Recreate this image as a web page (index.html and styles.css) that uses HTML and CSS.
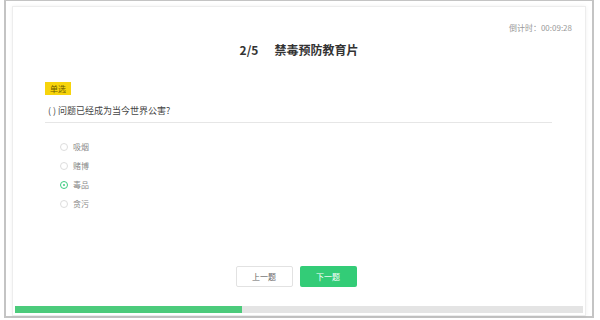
FILE: index.html
```html
<!DOCTYPE html>
<html lang="zh-CN">
<head>
    <meta charset="UTF-8">
    <title>禁毒预防教育片</title>
    <link rel="stylesheet" href="styles.css">
</head>
<body>
    <div class="frame">
        <div class="card">
            <div class="timer">倒计时：00:09:28</div>
            <h2 class="title"><span class="num">2/5</span>禁毒预防教育片</h2>

            <div class="body">
                <span class="tag">单选</span>
                <div class="question">( ) 问题已经成为当今世界公害?</div>

                <ul class="options">
                    <li><span class="radio"></span>吸烟</li>
                    <li><span class="radio"></span>赌博</li>
                    <li class="checked"><span class="radio"></span>毒品</li>
                    <li><span class="radio"></span>贪污</li>
                </ul>
            </div>

            <div class="actions">
                <button class="btn prev">上一题</button>
                <button class="btn next">下一题</button>
            </div>

            <div class="progress">
                <div class="progress-bar" style="width: 40%"></div>
            </div>
        </div>
    </div>
</body>
</html>
```

FILE: styles.css
```css
* {
    box-sizing: border-box;
}
body {
    margin: 0;
    background-color: #fff;
    font-family: "Noto Sans CJK SC", "Noto Sans", sans-serif;
}
.frame {
    width: 590px;
    height: 318px;
    margin-left: 4px;
    padding: 5px 6px 0 6px;
    border: 2px solid #c4c4c4;
    border-top-width: 1px;
}
.card {
    height: 310px;
    border: 1px solid #ededed;
    box-shadow: 0 0 4px rgba(0,0,0,0.06);
    display: flex;
    flex-direction: column;
}
.timer {
    padding: 16px 13px 0 0;
    text-align: right;
    font-size: 8px;
    line-height: 10px;
    color: #999;
}
.title {
    margin: 9px 0 0 0;
    text-align: center;
    font-size: 12px;
    line-height: 16px;
    font-weight: bold;
    color: #333;
}
.title .num {
    margin-right: 16px;
}
.body {
    padding: 0 33px 0 32px;
}
.tag {
    display: inline-block;
    margin-top: 24px;
    padding: 0 5px;
    height: 13px;
    line-height: 13px;
    font-size: 8px;
    background-color: #f7d40c;
    color: #6b5a00;
}
.question {
    margin-top: 8px;
    padding: 0 0 5px 3px;
    font-size: 9px;
    line-height: 12px;
    color: #444;
    border-bottom: 1px solid #e6e6e6;
}
.options {
    list-style: none;
    margin: 14px 0 0 0;
    padding: 0 0 0 15px;
}
.options li {
    display: flex;
    align-items: center;
    height: 19px;
    font-size: 8px;
    color: #888;
}
.radio {
    width: 8px;
    height: 8px;
    margin-right: 5px;
    border: 1px solid #ddd;
    border-radius: 50%;
    position: relative;
}
.checked .radio {
    border-color: #3ccb80;
}
.checked .radio::after {
    content: "";
    position: absolute;
    left: 2px;
    top: 2px;
    width: 2px;
    height: 2px;
    border-radius: 50%;
    background-color: #3ccb80;
}
.actions {
    margin-top: 53px;
    padding-right: 6px;
    display: flex;
    justify-content: center;
    gap: 7px;
}
.btn {
    width: 57px;
    height: 21px;
    padding: 0;
    font-family: inherit;
    font-size: 8px;
    border-radius: 2px;
    cursor: pointer;
}
.prev {
    background-color: #fff;
    color: #666;
    border: 1px solid #e2e2e2;
}
.next {
    background-color: #33cc77;
    color: #fff;
    border: none;
}
.progress {
    margin: 19px 2px 0 2px;
    height: 7px;
    background-color: #e4e4e4;
}
.progress-bar {
    height: 100%;
    background-color: #4ccb7b;
}
```
